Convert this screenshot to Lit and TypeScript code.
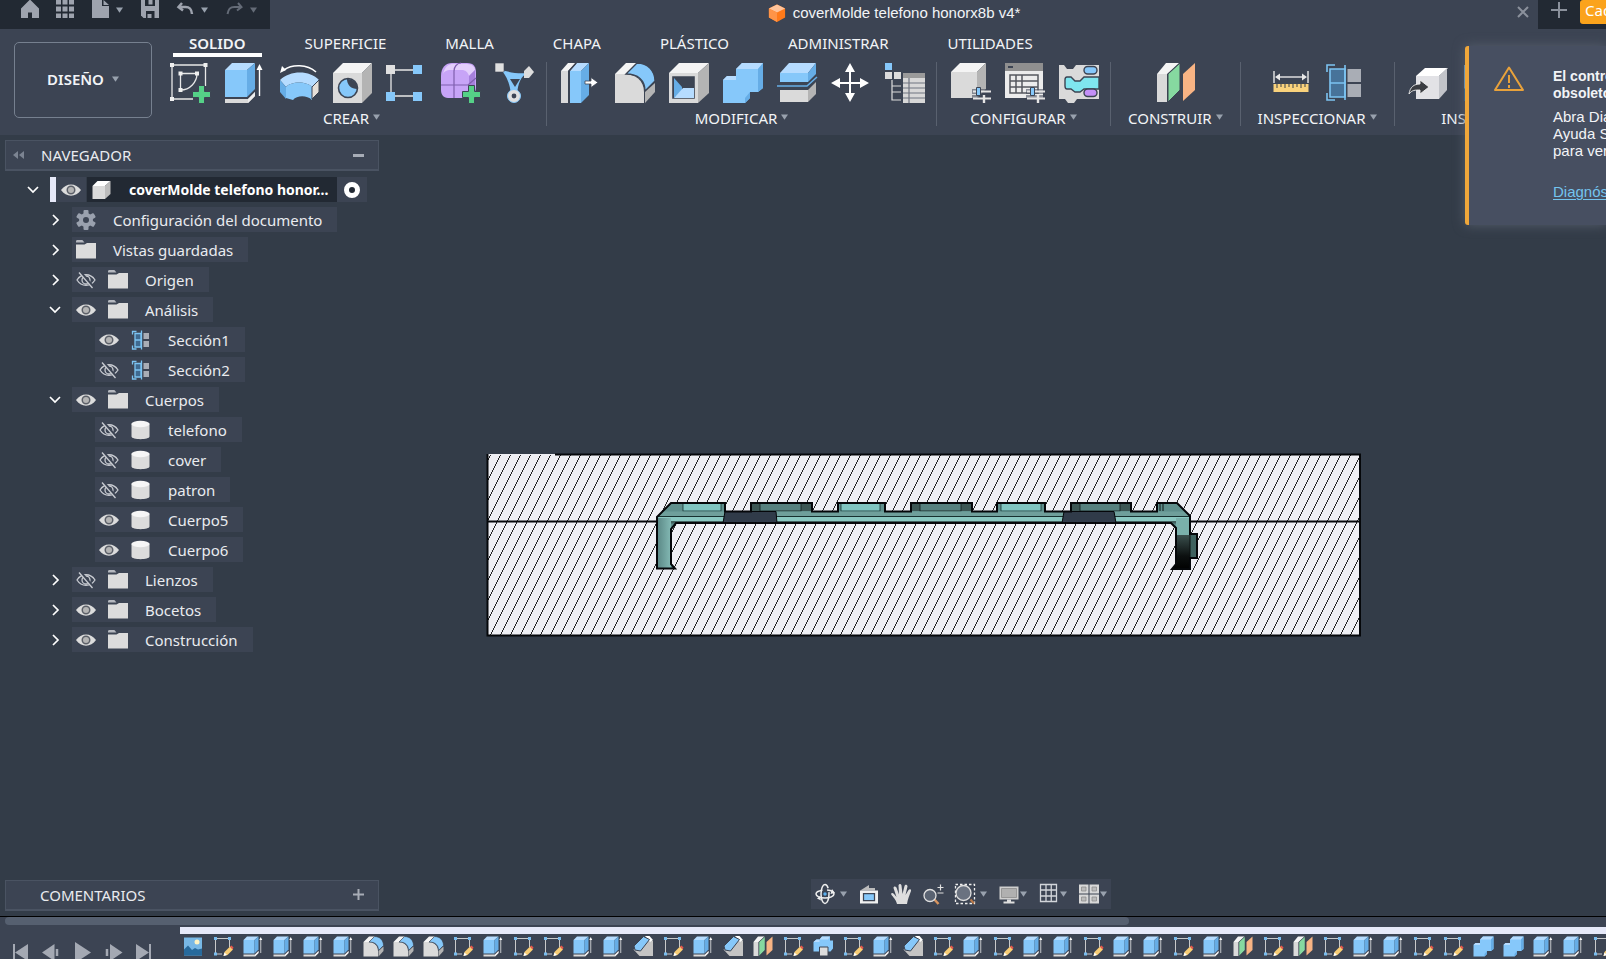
import { LitElement, html, css, svg, nothing, TemplateResult } from "lit";
import { customElement, property, state } from "lit/decorators.js";
import { classMap } from "lit/directives/class-map.js";

const B = "#86c8fa", BT = "#b6dcff", BS = "#66ade6", G = "#dadada", GT = "#f4f4f4", GS = "#b4b4b4", INK = "#3c4453";

const plus = svg`<path d="M28.500 23.500h6v6h6v6h-6v6h-6v-6h-6v-6h6z" fill="#55d187" stroke="${INK}" stroke-width="1"/>`;

const sliders = svg`
  <path d="M22 27h19v5h-19zM22 33h19v8h-19z" fill="${INK}" opacity=".55"/>
  <path d="M23 29.500h18M23 36.500h18" stroke="#e4e4e4" stroke-width="2"/>
  <path d="M26.500 25.500h4v8h-4z" fill="${B}" stroke="${INK}"/>
  <path d="M34 33v8" stroke="#e4e4e4" stroke-width="2.400"/>`;

const ICONS: Record<string, TemplateResult> = {
  sketch: svg`
    <path d="M2 3h33.500v21M2 3v34h21" fill="none" stroke="#e8e8e8" stroke-width="1.300"/>
    <path d="M10.500 28V11.500H27C27 20 20 28 10.500 28z" fill="none" stroke="#e8e8e8" stroke-width="1.300"/>
    <path d="M0 1h4v4H0zM33.500 1h4v4h-4zM0 35h4v4H0zM8.500 9.500h4v4h-4zM25 9.500h4v4h-4zM8.500 26h4v4h-4z" fill="#f0f0f0"/>${plus}`,
  extrude: svg`
    <path d="M1 8h22v27H1z" fill="${B}"/><path d="M1 8l7-7h23l-8 7z" fill="${BT}"/><path d="M23 8l8-7v26l-8 8z" fill="${BS}"/>
    <path d="M1 37h23l7-7v4l-7 7H1z" fill="${G}"/><path d="M24 37l7-7v4l-7 7z" fill="#eee"/>
    <path d="M35.500 6v28" stroke="#fff" stroke-width="1.400"/><path d="M35.500 2l3 6h-6z" fill="#fff"/>`,
  revolve: svg`
    <path d="M2 18C12 8 32 8 41 18l-7 7C29 19 13 19 8 25z" fill="${BT}"/>
    <path d="M8 25C13 19 29 19 34 25v13c-5-5-15-5-19 0l-7-2z" fill="${B}"/>
    <path d="M2 18l6 7v12l-6-7z" fill="${BS}"/><path d="M34 25l7-7v12l-7 7z" fill="#e6dfd8" stroke="${INK}"/>
    <path d="M6 8C14 2 29 2 38 10" fill="none" stroke="#fff" stroke-width="1.600"/><path d="M2 11l2-7 4 4z" fill="#fff"/>`,
  hole: svg`
    <path d="M1 11h29v30H1z" fill="${G}"/><path d="M1 11L11 1h29L30 11z" fill="${GT}"/><path d="M30 11L40 1v30L30 41z" fill="${GS}"/>
    <circle cx="16" cy="26" r="9.500" fill="${B}" stroke="${INK}" stroke-width="1.600"/><path d="M15 17c0 6 4 10 10.400 10A9.500 9.500 0 0 0 15 17z" fill="${INK}"/>`,
  pattern: svg`
    <path d="M5 8h30M5 34h30M5 8v26" stroke="#e8e8e8" stroke-width="1.300"/>
    <path d="M0 3h9v9H0z" fill="#e0e0e0"/><path d="M27 3h9v9h-9zM0 30h9v9H0zM27 30h9v9h-9z" fill="${B}"/>`,
  form: svg`
    <path d="M1 14C1 5 6 1 12 1h15c7 0 9 4 9 10v14c0 7-5 11-10 11H8c-5 0-7-4-7-8z" fill="#c7a4f7"/>
    <path d="M3 12C5 4 9 2 13 2h14c5 0 8 3 8 6l-6 6c-1-4-4-6-7-6H11c-5 0-7 2-8 4z" fill="#e3cffc"/>
    <path d="M29 14l6-6v18l-6 6z" fill="#a680dc"/>
    <path d="M1 23h27l8-7M14 36V9c0-4 3-8 7-8" fill="none" stroke="#7f5fae" stroke-width="1.200"/>${plus}`,
  generative: svg`
    <path d="M7 8c8 2 17 4 26 3-6 4-9 9-10 22h-6C16 22 13 14 7 8z" fill="${B}"/><path d="M16 17h10l-5 8z" fill="${INK}"/>
    <path d="M1 1h9v9H1z" fill="#e0e0e0" stroke="${INK}" stroke-width=".6"/><path d="M30 9l5-5 5 6-5 6h-5z" fill="#ddd"/>
    <circle cx="20" cy="34" r="6.500" fill="#e0e0e0" stroke="${B}"/><circle cx="20" cy="34" r="2.400" fill="${INK}"/>`,
  press: svg`
    <path d="M1 9h7v32H1z" fill="${G}"/><path d="M1 9l7-8h8L8 9z" fill="${GT}"/>
    <path d="M10 9h11v32H10z" fill="${B}"/><path d="M10 9l7-8h12l-8 8z" fill="${BT}"/><path d="M21 9l8-8v32l-8 8z" fill="${BS}"/>
    <path d="M9 41V9l7-8" fill="none" stroke="${INK}" stroke-width="1.400"/>
    <path d="M25 19h6v-3.500l7 5-7 5V22h-6z" fill="#fff" stroke="${INK}" stroke-width=".8"/>`,
  fillet: svg`
    <path d="M1 12h9c11 0 20 6 20 18v11H1z" fill="${G}"/><path d="M1 12L12 1h12L12 12z" fill="${GT}"/>
    <path d="M12 12L23 1c11 0 18 8 18 18L31 29C31 18 24 12 12 12z" fill="${B}" stroke="${INK}" stroke-width="1.300"/>
    <path d="M31 30l10-9v9L31 41z" fill="${GS}"/>`,
  shell: svg`
    <path d="M1 11h29v30H1z" fill="${G}"/><path d="M1 11L11 1h30L30 11z" fill="${GT}"/><path d="M30 11L41 1v30L30 41z" fill="${GS}"/>
    <path d="M5 15h21v21H5z" fill="${INK}" stroke="${INK}" stroke-width="1.600"/><path d="M6 16l8 9v4l-8 7z" fill="${BS}"/><path d="M6 36l9-10h11v10z" fill="${BT}"/>`,
  join: svg`
    <path d="M1 18l4-4h9V7l6-6h21v25l-5 4h-8v6l-5 5H1z" fill="${B}"/>
    <path d="M14 7l6-6h21l-5 6zM1 18l4-4h9v4z" fill="${BT}"/><path d="M36 7l5-6v25l-5 4zM23 36l5-6v6l-5 5z" fill="${BS}"/>`,
  split: svg`
    <path d="M4 11h28v9H4z" fill="${B}"/><path d="M4 11L13 1h27l-8 10z" fill="${BT}"/><path d="M32 11l8-10v11l-8 8z" fill="${BS}"/>
    <path d="M1 24h30l10-9" fill="none" stroke="${BS}" stroke-width="1.600"/>
    <path d="M4 28h28v12H4z" fill="${G}"/><path d="M32 28l8-8v12l-8 8z" fill="${GS}"/>`,
  move: svg`<path d="M20 1l-5 9h4v10H10v-4L1 21l9 5v-4h9v9h-4l5 9 5-9h-4v-9h9v4l9-5-9-5v4h-9V10h4z" fill="#fff"/>`,
  params: svg`
    <path d="M1 1h7v7H1z" fill="${B}"/><path d="M1 10h7v7H1zM10 10h7v7h-7z" fill="#dcdcdc"/>
    <path d="M8 18v20h9M8 24h9M8 30h9" fill="none" stroke="#dcdcdc" stroke-width="1.200"/>
    <path d="M19 11h22v30H19z" fill="#d8d8d8"/><path d="M19 11h22v5H19z" fill="#9a9a9a"/>
    <path d="M19 21h22M19 26h22M19 31h22M19 36h22M25 16v25" stroke="#6f7480" stroke-width="1.200"/>`,
  component: svg`
    <path d="M1 10h26v26H1z" fill="${G}"/><path d="M1 10l9-9h26l-9 9z" fill="${GT}"/><path d="M27 10l9-9v26l-9 9z" fill="${GS}"/>${sliders}`,
  table: svg`
    <path d="M1 1h38v35H1z" fill="#ececec"/><path d="M1 1h38v8H1z" fill="#8f8f8f"/><path d="M4 4h5v2H4z" fill="${INK}"/>
    <path d="M6 13h28v18H6zM6 19h28M6 25h28M12 13v18M18 13v18" fill="none" stroke="#55585f" stroke-width="1.500"/>${sliders}`,
  rules: svg`
    <path d="M1 3h5l3 4h6l3-4h23v34H19l-3 4h-6l-3-4H1z" fill="${G}"/>
    <path d="M41 15H26l-4 4h-5l-4-4H9c-2 0-2 2-2 3v6c0 2 1 3 2 3h4l4 3h5l4-3h15z" fill="#7fe6ef" stroke="${INK}" stroke-width="1.400"/>
    <rect x="26" y="4.500" width="13" height="7.500" rx="3.700" fill="${B}" stroke="${INK}" stroke-width="1.400"/>
    <rect x="26" y="27" width="13" height="7.500" rx="3.700" fill="#c490f7" stroke="${INK}" stroke-width="1.400"/>`,
  plane: svg`
    <path d="M1 12h10v28H1z" fill="${G}"/><path d="M1 12L10 1h13L11 12z" fill="${GT}"/>
    <path d="M12 12L24 1v27L12 40z" fill="#86d9a0" stroke="${INK}"/><path d="M27 12L39 1v27L27 39z" fill="#f8b484"/>`,
  measure: svg`
    <path d="M3 9v12M37 9v12" stroke="#e8e8e8" stroke-width="1.400"/><path d="M6 15h28" stroke="#e8e8e8" stroke-width="1.400"/>
    <path d="M4 15l5-3.500v7zM36 15l-5-3.500v7z" fill="#e8e8e8"/><path d="M2.500 22h35v8h-35z" fill="#f9d27c"/>
    <path d="M6 22v4M10 22v3M14 22v4M18 22v3M22 22v4M26 22v3M30 22v4M34 22v3" stroke="#5c5a50" stroke-width="1.200"/>`,
  section: svg`
    <path d="M2 10V3h8M2 31v7h8" fill="none" stroke="#7cc4f2" stroke-width="1.600"/>
    <path d="M5 7h15v28H5z" fill="#47739a" stroke="#7cc4f2" stroke-width="1.600"/>
    <path d="M5 21h15M20 3v35" stroke="#7cc4f2" stroke-width="1.600" fill="none"/>
    <path d="M22.500 7H36v13H22.500zM22.500 22H36v13H22.500z" fill="#a9adb5"/>`,
  analysis: svg`
    <path d="M3 9V3h8M3 31v7h8" fill="none" stroke="#7cc4f2" stroke-width="2.600"/>
    <path d="M8 7h12v27H8z" fill="#3f6a90" stroke="#7cc4f2" stroke-width="2.600"/>
    <path d="M8 20h12M21 1v38" stroke="#7cc4f2" stroke-width="2.600" fill="none"/>
    <path d="M25 6h11v12H25zM25 22h11v12H25z" fill="#a9adb5"/>`,
  insert: svg`
    <path d="M8 14h23v23H8z" fill="#e2e2e6"/><path d="M8 14l9-8h23l-9 8z" fill="#fff"/><path d="M31 14l8-8v22l-8 9z" fill="#c2c4ca"/>
    <path d="M1 32c1-7 5-10 11-10v-4l9 7-9 7v-4c-5 0-8 0-11 4z" fill="#3b3d42" stroke="#eee" stroke-width=".9"/>`,
  chamfer: svg`
    <path d="M1 27l12 13h27V10L32 6z" fill="#c4c4c4"/><path d="M24 0h9l7 8-6 4z" fill="#fff"/>
    <path d="M2 20L21 1l12 6-18 23-11-2z" fill="${B}" stroke="${INK}" stroke-width="2"/>`,
  cut: svg`
    <path d="M1 12l6-5h6l5-6h16v8h6v16l-5 6H1z" fill="${B}"/><path d="M13 7l5-6h16l-4 6zM1 12l6-5h6v5z" fill="${BT}"/>
    <path d="M13 22h17v18H13z" fill="#dcdcdc" stroke="${INK}" stroke-width="2"/>`,
  pencil: svg`
    <path d="M5 5h28v17M5 5v31h13" fill="none" stroke="#d8d8d8" stroke-width="1.800"/>
    <path d="M2 2h6v6H2zM30 2h6v6h-6zM2 33h6v6H2z" fill="#79bdf0"/>
    <path d="M21 40l2-8 11-11 6 6-11 11z" fill="#f8cd75"/><path d="M34 21l3-2 4 4-2 4z" fill="#e8574c"/><path d="M21 40l2-7 5 5z" fill="#fff"/>`,
  canvas: svg`<path d="M2 3h36v36H2z" fill="#78b8e6"/><circle cx="28" cy="12" r="5" fill="#fdf3c4"/><path d="M2 27l8-8 8 9 6-4 6 3 8-2v14H2z" fill="#276a9c"/>`,
  eye: svg`<path d="M0 20C10 5 30 5 40 20 30 35 10 35 0 20z" fill="#dcdcdc"/><circle cx="20" cy="20" r="7.500" fill="#b4b4b4" stroke="#5c6069" stroke-width="3"/>`,
  eyeoff: svg`<path d="M2 20C11 6 29 6 38 20 29 34 11 34 2 20z" fill="none" stroke="#c9ccd2" stroke-width="2.600"/><circle cx="20" cy="20" r="8" fill="none" stroke="#c9ccd2" stroke-width="2.600"/><path d="M8 4l27 31" stroke="${INK}" stroke-width="6"/><path d="M6 5l27 31" stroke="#c9ccd2" stroke-width="2.600"/>`,
  folder: svg`<path d="M0 3c0-2 1-3 3-3h9c2 0 3 3 5 5H0z" fill="#b5b8bf"/><path d="M0 9h17l5-3h18v31H0z" fill="#dcdcdc"/>`,
  body: svg`<path d="M1 7v26c0 7 36 7 36 0V7z" fill="#dcdcdc"/><ellipse cx="19" cy="8" rx="18" ry="6.500" fill="#f6f6f6"/>`,
  cube: svg`<path d="M1 12h25v26H1z" fill="${G}"/><path d="M1 12L11 2h26L26 12z" fill="#fff"/><path d="M26 12L37 2v26L26 38z" fill="#bcbcbc"/>`,
  gear: svg`<g fill="#9aa1ae"><circle cx="20" cy="20" r="14"/>${[0, 60, 120].map(a => svg`<rect x="15" y="0" width="10" height="40" rx="2" transform="rotate(${a} 20 20)"/>`)}</g><circle cx="20" cy="20" r="6" fill="${INK}"/>`,
  brand: svg`<path d="M20 1l18 9v20l-18 10L2 30V10z" fill="#ff7a1a"/><path d="M20 1l18 9-18 9L2 10z" fill="#ffc39a"/><path d="M2 10l18 9v21L2 30z" fill="#ff9447"/>`,
  home: svg`<path d="M2 17L20 -1l18 18v19H24V25h-8v11H2z" fill="#9ea3ae"/>`,
  apps: svg`<path d="M0 0h10v9H0zM13 0h10v9H13zM26 0h10v9H26zM0 13h10v10H0zM13 13h10v10H13zM26 13h10v10H26zM0 27h10v9H0zM13 27h10v9H13zM26 27h10v9H26z" fill="#9ea3ae"/>`,
  file: svg`<path d="M0 0h20v12h14v24H0zM23 0l11 10H23z" fill="#9ea3ae"/>`,
  save: svg`<path d="M0 0h36v36H5l-5-5z" fill="#9ea3ae"/><path d="M8 0h20v12H8zM10 22h17v14H10z" fill="#222933"/><path d="M15 0h8v9h-8zM13 28h8v8h-8z" fill="#9ea3ae"/>`,
  undo: svg`<path d="M10 6L3 14l9 7M4 14h13c9 0 12 4 13 14" fill="none" stroke="#9ea3ae" stroke-width="5"/>`,
  redo: svg`<path d="M24 6l7 8-9 7M30 14H17C8 14 5 18 3 28" fill="none" stroke="#646b77" stroke-width="4"/>`,
  orbit: svg`<ellipse cx="20" cy="20" rx="18" ry="8" fill="none" stroke="#f0f0f0" stroke-width="3" stroke-dasharray="58 9"/><ellipse cx="20" cy="20" rx="8" ry="19" fill="none" stroke="#f0f0f0" stroke-width="3" stroke-dasharray="76 8"/><circle cx="20" cy="20" r="3.500" fill="#5cb0ee"/><path d="M34 10l6 8-9 2zM10 24l2 9-8-4z" fill="#f0f0f0"/>`,
  look: svg`<path d="M4 12L20 2v6h12v5H4z" fill="#bcbcbc"/><path d="M2 13h36v26H2z" fill="#f0f0f0"/><path d="M9 19h22v14H9z" fill="${B}" stroke="${INK}" stroke-width="2.500"/>`,
  pan: svg`<path d="M12 40C10 31 5 28 0 20c1-3 4-2 6 0l5 6L5 8c0-4 4-4 6-1l5 14-1-18c1-4 5-4 6 0l2 17 4-16c1-4 6-3 6 1l-4 17 6-10c2-3 6-2 5 2-3 9-7 17-8 26z" fill="#dedede"/>`,
  zoom: svg`<path d="M22 30l9 10" stroke="#d89560" stroke-width="5"/><circle cx="14" cy="23" r="12" fill="#5a6372" stroke="#e0e0e0" stroke-width="2.600"/><path d="M35 1v12M29 7h12M29 18h12" stroke="#e0e0e0" stroke-width="2.400"/>`,
  fit: svg`<path d="M1 1h38v38H1z" fill="none" stroke="#eee" stroke-width="2.600" stroke-dasharray="5 4"/><circle cx="17" cy="18" r="15" fill="#6a7280" stroke="#dedede" stroke-width="2.600"/><path d="M31 31l7 8" stroke="#b9794a" stroke-width="4"/>`,
  display: svg`<path d="M1 5h38v26H1z" fill="#cfcfcf"/><path d="M5 9h30v18H5z" fill="#b0b0b0" stroke="#888" stroke-width="1.500"/><path d="M16 31h8v4h7v4H9v-4h7z" fill="#dedede"/>`,
  grid: svg`<path d="M3 1h32v34H3zM14 1v34M24.500 1v34M3 12h32M3 24h32" fill="none" stroke="#d2d5da" stroke-width="2.600"/>`,
  views: svg`<path d="M0 1h19v18H0zM21 1h19v18H21zM0 21h19v18H0zM21 21h19v18H21z" fill="#d8d8d8"/><path d="M5 6h9v8H5zM26 6h9v8h-9zM5 26h9v8H5zM26 26h9v8h-9z" fill="#bbb" stroke="#8a8a8a" stroke-width="1.500"/>`,
  first: svg`<path d="M6 4v34" stroke="#a4a9b3" stroke-width="4"/><path d="M34 4v34L8 21z" fill="#a4a9b3"/>`,
  prev: svg`<path d="M25 4v34L0 21z" fill="#a4a9b3"/><path d="M30 14v14" stroke="#a4a9b3" stroke-width="5"/>`,
  play: svg`<path d="M4 0l32 21L4 42z" fill="#a4a9b3"/>`,
  next: svg`<path d="M12 4v34l25-17z" fill="#a4a9b3"/><path d="M6 14v14" stroke="#a4a9b3" stroke-width="5"/>`,
  last: svg`<path d="M30 4v34" stroke="#a4a9b3" stroke-width="4"/><path d="M2 4v34l26-17z" fill="#a4a9b3"/>`,
};

const icon = (name: string, size = "s20") =>
  html`<svg class="icon ${size}" viewBox="0 0 40 40" aria-hidden="true">${ICONS[name]}</svg>`;
const caret = (dim = false) =>
  html`<svg class=${classMap({ caret: true, dim })} viewBox="0 0 8 6" aria-hidden="true"><path d="M0 0h8L4 6z" /></svg>`;

const shared = css`
  * { box-sizing: border-box; }
  button { font: inherit; color: inherit; background: none; border: 0; padding: 0; margin: 0; display: inline-flex; align-items: center; justify-content: center; }
  .icon { display: block; flex: none; overflow: visible; }
  .s12 { width: 12px; height: 12px; }
  .s18 { width: 18px; height: 18px; }
  .s20 { width: 20px; height: 20px; }
  .s40 { width: 40px; height: 40px; }
  .caret { width: 7px; height: 6px; fill: #98a1ad; flex: none; }
  .caret.dim { fill: #646b77; }
`;

@customElement("ribbon-bar")
class RibbonBar extends LitElement {
  @state() active = "SOLIDO";
  tabs = ["SOLIDO", "SUPERFICIE", "MALLA", "CHAPA", "PLÁSTICO", "ADMINISTRAR", "UTILIDADES"];
  groups: [string, string[]][] = [
    ["CREAR", ["sketch", "extrude", "revolve", "hole", "pattern", "form", "generative"]],
    ["MODIFICAR", ["press", "fillet", "shell", "join", "split", "move", "params"]],
    ["CONFIGURAR", ["component", "table", "rules"]],
    ["CONSTRUIR", ["plane"]],
    ["INSPECCIONAR", ["measure", "section"]],
    ["INSERTAR", ["insert", "canvas", "component"]],
  ];
  static styles = [shared, css`
    :host { display: flex; height: 106px; padding: 4px 0 0 14px; background: #3c4453; color: #f2f4f7; overflow: hidden; }
    .mode { width: 138px; height: 76px; margin-top: 9px; padding-bottom: 2px; border: 1px solid #76808f; border-radius: 5px; font-weight: 600; gap: 8px; flex: none; }
    .main { margin-left: 5px; display: flex; flex-direction: column; gap: 5px; }
    .tabs { display: flex; gap: 27px; padding-left: 16px; }
    .tab { height: 24px; padding: 0 16px; line-height: 20px; border-bottom: 4px solid transparent; white-space: nowrap; }
    .tab.on { font-weight: 600; border-color: #fff; }
    .groups { display: flex; }
    .group { border-right: 1px solid #59616f; height: 64px; padding: 0 12px 0 13px; display: flex; flex-direction: column; align-items: center; gap: 6px; }
    .group:last-child { border: 0; }
    .tools { display: flex; gap: 14px; }
    .label { gap: 4px; padding: 0 5px 0 4px; line-height: 20px; white-space: nowrap; }
    .label .caret { margin-bottom: 3px; }
  `];
  render() {
    return html`
      <button class="mode">DISEÑO ${caret()}</button>
      <div class="main">
        <nav class="tabs">
          ${this.tabs.map(t => html`<button class=${classMap({ tab: true, on: t === this.active })} @click=${() => (this.active = t)}>${t}</button>`)}
        </nav>
        <div class="groups">
          ${this.groups.map(([name, tools]) => html`
            <div class="group">
              <div class="tools">${tools.map(t => html`<button aria-label=${t}>${icon(t, "s40")}</button>`)}</div>
              <button class="label">${name} ${caret()}</button>
            </div>`)}
        </div>
      </div>`;
  }
}

interface Node { label: string; level: number; open?: boolean; leaf?: boolean; eye?: boolean; icon: string; }

@customElement("model-browser")
class ModelBrowser extends LitElement {
  nodes: Node[] = [
    { label: "Configuración del documento", level: 1, icon: "gear" },
    { label: "Vistas guardadas", level: 1, icon: "folder" },
    { label: "Origen", level: 1, eye: false, icon: "folder" },
    { label: "Análisis", level: 1, open: true, eye: true, icon: "folder" },
    { label: "Sección1", level: 2, leaf: true, eye: true, icon: "analysis" },
    { label: "Sección2", level: 2, leaf: true, eye: false, icon: "analysis" },
    { label: "Cuerpos", level: 1, open: true, eye: true, icon: "folder" },
    { label: "telefono", level: 2, leaf: true, eye: false, icon: "body" },
    { label: "cover", level: 2, leaf: true, eye: false, icon: "body" },
    { label: "patron", level: 2, leaf: true, eye: false, icon: "body" },
    { label: "Cuerpo5", level: 2, leaf: true, eye: true, icon: "body" },
    { label: "Cuerpo6", level: 2, leaf: true, eye: true, icon: "body" },
    { label: "Lienzos", level: 1, eye: false, icon: "folder" },
    { label: "Bocetos", level: 1, eye: true, icon: "folder" },
    { label: "Construcción", level: 1, eye: true, icon: "folder" },
  ];
  static styles = [shared, css`
    :host { display: block; width: 374px; color: #e9ebef; }
    .head { height: 31px; display: flex; align-items: center; padding: 0 14px 0 7px; background: #3c4453; border: 1px solid #4a5362; border-bottom-width: 2px; }
    .head .icon { margin-right: 16px; }
    .head span { flex: 1; }
    .minus { width: 12px; height: 12px; }
    .minus::before { content: ""; width: 11px; height: 3px; background: #a7acb6; }
    ul { list-style: none; margin: 0; padding: 6px 0 0 0; display: flex; flex-direction: column; gap: 5px; }
    li { display: flex; align-items: center; height: 25px; }
    .level1 { padding-left: 42px; }
    .level2 { padding-left: 90px; }
    .chev { width: 16px; height: 16px; margin-right: 9px; }
    .chev svg { width: 12px; height: 12px; fill: none; stroke: #fff; stroke-width: 1.700; }
    .pill { display: flex; align-items: center; height: 25px; background: #3c4453; padding: 0 15px 0 4px; white-space: nowrap; }
    .pill .mark { margin-left: 12px; }
    .pill .text { margin-left: 17px; }
    .root { padding-left: 20px; }
    .root .bar { width: 6px; height: 25px; background: #e6e9f9; }
    .root .cell { height: 25px; width: 30px; display: flex; align-items: center; justify-content: center; background: #3c4453; }
    .root .name { height: 25px; display: flex; align-items: center; gap: 17px; background: #222933; margin-left: 1px; padding: 0 9px 0 5px; font-size: 14px; font-weight: 700; white-space: nowrap; color: #fff; }
    .radio { appearance: none; margin: 0; width: 16px; height: 16px; border: 5px solid #fff; border-radius: 50%; background: #222933; }
  `];
  chevron(open?: boolean) {
    return html`<button class="chev" aria-label=${open ? "Contraer" : "Expandir"}><svg viewBox="0 0 12 12"><path d=${open ? "M1 3l5 5 5-5" : "M4 1l5 5-5 5"} /></svg></button>`;
  }
  render() {
    return html`
      <div class="head">
        <svg class="icon s12" viewBox="0 0 12 12"><path d="M5 2v8L0 6zM11 2v8L6 6z" fill="#7c8492" /></svg>
        <span>NAVEGADOR</span><button class="minus" aria-label="Minimizar"></button>
      </div>
      <ul>
        <li class="root">
          ${this.chevron(true)}<span class="bar"></span><span class="cell">${icon("eye")}</span>
          <span class="name">${icon("cube")}coverMolde telefono honor...</span>
          <span class="cell"><input class="radio" type="radio" checked aria-label="Activar componente" /></span>
        </li>
        ${this.nodes.map(n => html`
          <li class="level${n.level}">
            ${n.leaf ? nothing : this.chevron(n.open)}
            <span class="pill">
              ${n.eye === undefined ? icon(n.icon) : html`<button aria-label="Visibilidad">${icon(n.eye ? "eye" : "eyeoff")}</button><span class="mark">${icon(n.icon)}</span>`}
              <span class="text">${n.label}</span>
            </span>
          </li>`)}
      </ul>`;
  }
}

@customElement("section-view")
class SectionView extends LitElement {
  static styles = css`
    :host { display: block; }
    svg { display: block; width: 100%; height: 100%; }
  `;
  hatch() {
    let d = "";
    for (let x = 490; x < 1460; x += 10) d += `M${x + 0.7} 454.700l-91 182`;
    return d;
  }
  render() {
    const outline = "M657 517L671 503H725V511.500H751V503H812V511.500H838V503H885V511.500H911V503H972V511.500H997V503H1045V511.500H1071V503H1131V511.500H1157V503H1177L1190 516V534H1197V558H1190V569H1172L1176 564V528L1171 523H676L671 529V564L675 568.500H657Z";
    const bright = [[683, 38], [841, 39], [1001, 40]];
    const dark = [[751, 61], [911, 61], [1071, 60]];
    return html`
      <svg viewBox="0 135 1606 781" preserveAspectRatio="xMidYMid meet" role="img" aria-label="Sección del molde">
        <defs>
          <clipPath id="block"><rect x="488" y="454" width="872" height="182" /></clipPath>
          <clipPath id="part"><path d=${outline} /></clipPath>
          <linearGradient id="leg"><stop offset="0" stop-color="#5a8785" /><stop offset="1" stop-color="#83b9b4" /></linearGradient>
          <linearGradient id="shade" x2="0" y2="1"><stop offset="0" stop-color="#3a4f4d" /><stop offset=".6" stop-color="#0c1010" /><stop offset="1" stop-color="#000" /></linearGradient>
        </defs>
        <rect x="487" y="454" width="873" height="182" fill="#efeff4" />
        <path d=${this.hatch()} clip-path="url(#block)" stroke="#000" stroke-width=".85" shape-rendering="crispEdges" />
        <path d="M555 454.500H1360V635.500H487.500V454M487 521.500H1360" fill="none" stroke="#05070a" stroke-width="2" />
        <g clip-path="url(#part)">
          <rect x="655" y="500" width="545" height="70" fill="#5f8f8c" />
          ${dark.map(([x, w]) => svg`<rect x=${x} y="503" width=${w} height="8" fill="#3c5654" /><rect x=${x + 9} y="503" width=${w - 20} height="8" fill="#57817f" stroke="#101a1a" stroke-width=".8" />`)}
          ${bright.map(([x, w]) => svg`<rect x=${x} y="503" width=${w} height="8" fill="#80c5c1" stroke="#16302f" stroke-width=".8" />`)}
          <rect x="655" y="511.500" width="545" height="5" fill="#6f9f9b" />
          <rect x="655" y="516.500" width="540" height="5" fill="#8ac8c1" />
          <rect x="655" y="521" width="540" height="2.500" fill="#41605e" />
          <path d="M657 516.500H1190" stroke="#16302f" />
          <rect x="657" y="518" width="14" height="52" fill="url(#leg)" />
          <rect x="1176" y="518" width="14" height="18" fill="#7ab0ab" />
          <rect x="1170" y="535" width="20" height="35" fill="url(#shade)" />
          <rect x="1190" y="533" width="8" height="26" fill="#3f625f" />
          <path d="M1190 533v26M1160 503v8M1163 503v8" stroke="#0a1110" />
        </g>
        <path d="M725 511.500H776L777 523H723ZM1064 511.500H1114L1116 523H1062Z" fill="#303b49" stroke="#05070a" stroke-width="1" />
        <path d=${outline} fill="none" stroke="#05070a" stroke-width="2" />
      </svg>`;
  }
}

@customElement("time-line")
class TimeLine extends LitElement {
  @property({ type: Array }) steps: string[] =
    ("canvas pencil extrude extrude extrude extrude fillet fillet fillet pencil extrude pencil " +
      "pencil extrude extrude chamfer pencil extrude chamfer plane pencil cut pencil extrude chamfer pencil extrude pencil extrude extrude pencil " +
      "extrude extrude pencil extrude plane pencil plane pencil extrude extrude pencil pencil join join extrude extrude pencil").split(" ");
  static styles = [shared, css`
    :host { display: block; background: #3c4453; border-top: 1px solid #000; height: 43px; overflow: hidden; }
    .scroll { height: 8px; margin: 0 0 2px 5px; width: 70%; background: #566070; border-radius: 4px; }
    .row { display: flex; }
    .play { width: 180px; flex: none; display: flex; gap: 11px; padding: 15px 0 0 11px; }
    .track { flex: 1; min-width: 0; border-top: 7px solid #e6e9f9; }
    .steps { display: flex; gap: 10px; padding: 2px 3px; overflow: hidden; }
  `];
  render() {
    return html`
      <div class="scroll"></div>
      <div class="row">
        <div class="play">${["first", "prev", "play", "next", "last"].map(n => html`<button aria-label=${n}>${icon(n)}</button>`)}</div>
        <div class="track"><div class="steps">${this.steps.map(s => html`<button aria-label=${s}>${icon(s)}</button>`)}</div></div>
      </div>`;
  }
}

@customElement("app-root")
class AppRoot extends LitElement {
  static styles = [shared, css`
    :host { display: flex; flex-direction: column; height: 100vh; overflow: hidden; position: relative; background: #333c48; font: 15px/20px "Noto Sans", "Open Sans", sans-serif; color: #e9ebef; }
    .top { display: flex; height: 29px; flex: none; background: #3c4453; }
    .quick { width: 270px; background: #222933; display: flex; padding-left: 20px; flex: none; }
    .quick button { height: 18px; align-items: flex-start; gap: 4px; }
    .quick .caret { margin-top: 7px; }
    .slot { width: 36px; flex: none; justify-content: flex-start; }
    .slot.wide { width: 49px; }
    .title { flex: 1; display: flex; align-items: center; justify-content: center; gap: 7px; padding: 0 0 3px 10px; font: 15px/20px "Liberation Sans", Arial, sans-serif; color: #f2f4f7; }
    .close { width: 30px; padding: 0 0 5px; }
    .extra { width: 68px; background: #222933; display: flex; flex: none; overflow: hidden; }
    .add { width: 42px; flex: none; padding-bottom: 10px; }
    .close svg, .add svg { width: 16px; height: 16px; fill: none; stroke: #8b919c; stroke-width: 2; }
    .trial { height: 24px; background: #fba31c; color: #fff; border-radius: 3px; padding: 0 5px 5px; flex: none; }
    .stage { flex: 1; position: relative; min-height: 0; display: flex; flex-direction: column; justify-content: space-between; padding: 5px; }
    .view { position: absolute; inset: 0; }
    .stage model-browser, .foot { position: relative; }
    .foot { display: flex; align-items: center; }
    .comments { width: 374px; height: 31px; background: #3c4453; border: 1px solid #4a5362; border-bottom-width: 2px; display: flex; align-items: center; justify-content: space-between; padding: 0 14px 0 34px; }
    .comments svg { width: 11px; height: 11px; stroke: #a7acb6; stroke-width: 2; }
    .tools { flex: 1; display: flex; justify-content: center; padding: 0 59px 2px 0; }
    .nav { display: flex; align-items: center; gap: 12px; height: 30px; padding: 0 4px; background: #3c4453; }
    .nav button { gap: 5px; }
    .nav .tight { gap: 1px; }
    .notice { position: absolute; top: 46px; right: 0; width: 141px; height: 179px; overflow: hidden; display: flex; gap: 29px; background: #474f61; border-left: 4px solid #f0a73a; border-radius: 3px 0 0 3px; padding: 22px 0 0 25px; font: 15px/17px "Liberation Sans", Arial, sans-serif; white-space: nowrap; color: #f2f4f7; box-shadow: 0 0 12px #565e6c; }
    .warn { width: 30px; height: 25px; margin-top: -2px; flex: none; fill: none; stroke: #e9a23b; stroke-width: 2; stroke-linejoin: round; }
    .notice strong { display: block; font-size: 14px; }
    .notice p { margin: 6px 0 24px; }
    .notice a { color: #74c4ee; text-underline-offset: 2px; }
  `];
  render() {
    const nav: [string, string][] = [["orbit", "menu"], ["look", ""], ["pan", ""], ["zoom", ""], ["fit", "menu"], ["display", "tight"], ["grid", "tight"], ["views", "tight"]];
    return html`
      <header class="top">
        <div class="quick">
          <button class="slot" aria-label="Inicio">${icon("home")}</button>
          <button class="slot" aria-label="Datos">${icon("apps")}</button>
          <button class="slot wide" aria-label="Archivo">${icon("file")}${caret()}</button>
          <button class="slot" aria-label="Guardar">${icon("save")}</button>
          <button class="slot wide" aria-label="Deshacer">${icon("undo")}${caret()}</button>
          <button class="slot wide" aria-label="Rehacer">${icon("redo")}${caret(true)}</button>
        </div>
        <div class="title">${icon("brand", "s18")}coverMolde telefono honorx8b v4*</div>
        <button class="close" aria-label="Cerrar"><svg viewBox="0 0 16 16"><path d="M3 3l10 10M13 3L3 13" /></svg></button>
        <div class="extra">
          <button class="add" aria-label="Nueva pestaña"><svg viewBox="0 0 16 16"><path d="M8 0v16M0 8h16" /></svg></button>
          <button class="trial">Caduca</button>
        </div>
      </header>
      <ribbon-bar></ribbon-bar>
      <main class="stage">
        <section-view class="view"></section-view>
        <model-browser></model-browser>
        <div class="foot">
          <div class="comments"><span>COMENTARIOS</span><button aria-label="Añadir"><svg viewBox="0 0 11 11"><path d="M5.500 0v11M0 5.500h11" /></svg></button></div>
          <div class="tools"><div class="nav">${nav.map(([n, m]) => html`<button class=${m} aria-label=${n}>${icon(n)}${m ? caret() : nothing}</button>`)}</div></div>
        </div>
      </main>
      <time-line></time-line>
      <aside class="notice" role="alert">
        <svg class="warn" viewBox="0 0 30 25"><path d="M15 1.500L29 24H1z" /><path d="M15 9v8M15 19v3" /></svg>
        <div><strong>El controlador</strong><strong>obsoleto</strong><p>Abra Diagnóstico<br />Ayuda Soporte<br />para ver</p><a href="#diagnostico">Diagnóstico</a></div>
      </aside>`;
  }
}
